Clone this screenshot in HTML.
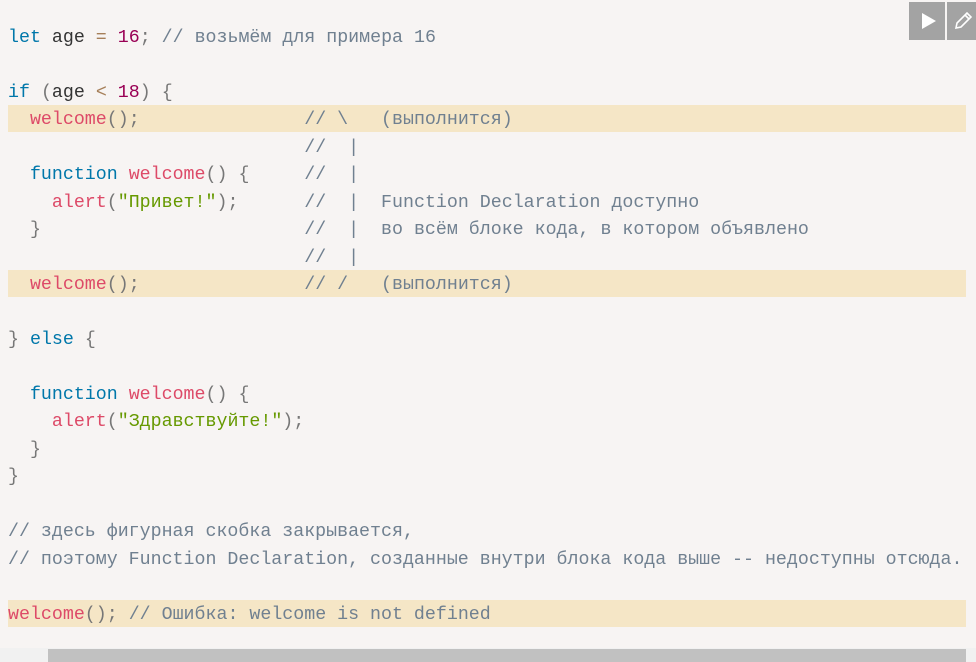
<!DOCTYPE html>
<html><head><meta charset="utf-8"><style>
html,body{margin:0;padding:0;}
body{width:976px;height:662px;background:#f7f4f3;position:relative;overflow:hidden;}
pre{position:absolute;left:8px;top:25px;margin:0;font-family:"Liberation Mono","DejaVu Sans Mono",monospace;font-size:18.3px;line-height:27.45px;color:#333;z-index:2;}
.hl{position:absolute;left:8px;width:958px;height:27px;background:#f5e6c6;z-index:1;}
.k{color:#07a}.n{color:#905}.f{color:#dd4a68}.s{color:#690}.c{color:#708090}.o{color:#a67f59}.p{color:#777}
.btn{position:absolute;top:2px;height:38px;background:#a3a3a3;z-index:3;}
.track{position:absolute;left:0;top:648px;width:976px;height:14px;background:#f1f1f1;}
.thumb{position:absolute;left:48px;top:649px;width:918px;height:13px;background:#c1c1c1;}
</style></head><body>
<div class="hl" style="top:105px"></div>
<div class="hl" style="top:270px"></div>
<div class="hl" style="top:600px"></div>
<div class="btn" style="left:909px;width:36px"><svg width="36" height="38"><polygon points="13,11 13,27 27,19" fill="#fff"/></svg></div>
<div class="btn" style="left:947px;width:29px"><svg width="29" height="38"><path d="M9 26 L10 21 L20 11 L24 15 L14 25 Z M18 13 L22 17" fill="none" stroke="#fff" stroke-width="1.6"/></svg></div>
<pre><span class="k">let</span> age <span class="o">=</span> <span class="n">16</span><span class="p">;</span> <span class="c">// возьмём для примера 16</span>

<span class="k">if</span> <span class="p">(</span>age <span class="o">&lt;</span> <span class="n">18</span><span class="p">)</span> <span class="p">{</span>
  <span class="f">welcome</span><span class="p">();</span>               <span class="c">// \   (выполнится)</span>
                           <span class="c">//  |</span>
  <span class="k">function</span> <span class="f">welcome</span><span class="p">()</span> <span class="p">{</span>     <span class="c">//  |</span>
    <span class="f">alert</span><span class="p">(</span><span class="s">"Привет!"</span><span class="p">);</span>      <span class="c">//  |  Function Declaration доступно</span>
  <span class="p">}</span>                        <span class="c">//  |  во всём блоке кода, в котором объявлено</span>
                           <span class="c">//  |</span>
  <span class="f">welcome</span><span class="p">();</span>               <span class="c">// /   (выполнится)</span>

<span class="p">}</span> <span class="k">else</span> <span class="p">{</span>

  <span class="k">function</span> <span class="f">welcome</span><span class="p">()</span> <span class="p">{</span>
    <span class="f">alert</span><span class="p">(</span><span class="s">"Здравствуйте!"</span><span class="p">);</span>
  <span class="p">}</span>
<span class="p">}</span>

<span class="c">// здесь фигурная скобка закрывается,</span>
<span class="c">// поэтому Function Declaration, созданные внутри блока кода выше -- недоступны отсюда.</span>

<span class="f">welcome</span><span class="p">();</span> <span class="c">// Ошибка: welcome is not defined</span></pre>
<div class="track"></div><div class="thumb"></div>
</body></html>
